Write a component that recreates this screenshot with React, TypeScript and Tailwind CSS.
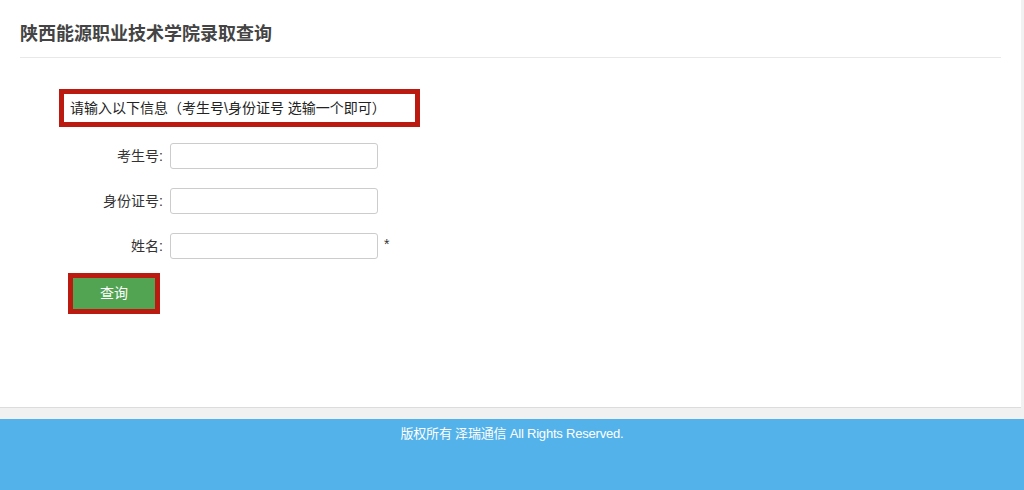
import React, { useState } from 'react';

const font = { fontFamily: '"Liberation Sans", "Noto Sans CJK SC", sans-serif' };

interface FieldRowProps {
  label: string;
  value: string;
  onChange: (v: string) => void;
  required?: boolean;
}

const FieldRow: React.FC<FieldRowProps> = ({ label, value, onChange, required }) => (
  <div className="flex items-center h-[26px]">
    <label className="w-[143px] text-right text-[14px] leading-[26px] text-[#333]">{label}:</label>
    <input
      value={value}
      onChange={(e) => onChange(e.target.value)}
      className="ml-[7px] w-[208px] h-[26px] border border-[#ccc] rounded-[3px] bg-white px-2 text-[14px] outline-none"
    />
    {required && <span className="ml-[6px] text-[14px] leading-[20px] text-[#333] -mt-[4px]">*</span>}
  </div>
);

export default function App() {
  const [ksh, setKsh] = useState('');
  const [sfz, setSfz] = useState('');
  const [xm, setXm] = useState('');

  return (
    <div className="w-[1024px] h-[490px] bg-[#f1f1f1] flex flex-col overflow-hidden" style={font}>
      <div className="w-[1021px] h-[408px] bg-white border-b border-[#dcdcdc] px-[20px] shrink-0">
        <div className="pt-[22px] pb-[11px] border-b border-[#e8e8e8] w-[981px]">
          <h1 className="text-[18px] leading-[24px] font-bold text-[#444]">陕西能源职业技术学院录取查询</h1>
        </div>

        <div className="mt-[31px] ml-[39px] w-[361px] h-[38px] border-[5px] border-[#bb1a10] pl-[6px]">
          <p className="text-[14px] leading-[28px] text-[#222]">请输入以下信息（考生号\身份证号 选输一个即可）</p>
        </div>

        <div className="mt-[16px] flex flex-col gap-[19px]">
          <FieldRow label="考生号" value={ksh} onChange={setKsh} />
          <FieldRow label="身份证号" value={sfz} onChange={setSfz} />
          <FieldRow label="姓名" value={xm} onChange={setXm} required />
        </div>

        <div className="mt-[14px] ml-[48px] w-[92px] h-[41px] border-[5px] border-[#bb1a10]">
          <button className="w-full h-full bg-[#52a352] text-white text-[14px] leading-[31px]">查询</button>
        </div>
      </div>

      <div className="h-[11px] shrink-0" />

      <div className="flex-1 bg-[#53b2ea] text-center">
        <p className="pt-[5px] text-[13px] leading-[20px] text-white tracking-[-0.2px]">版权所有 泽瑞通信 All Rights Reserved.</p>
      </div>
    </div>
  );
}
